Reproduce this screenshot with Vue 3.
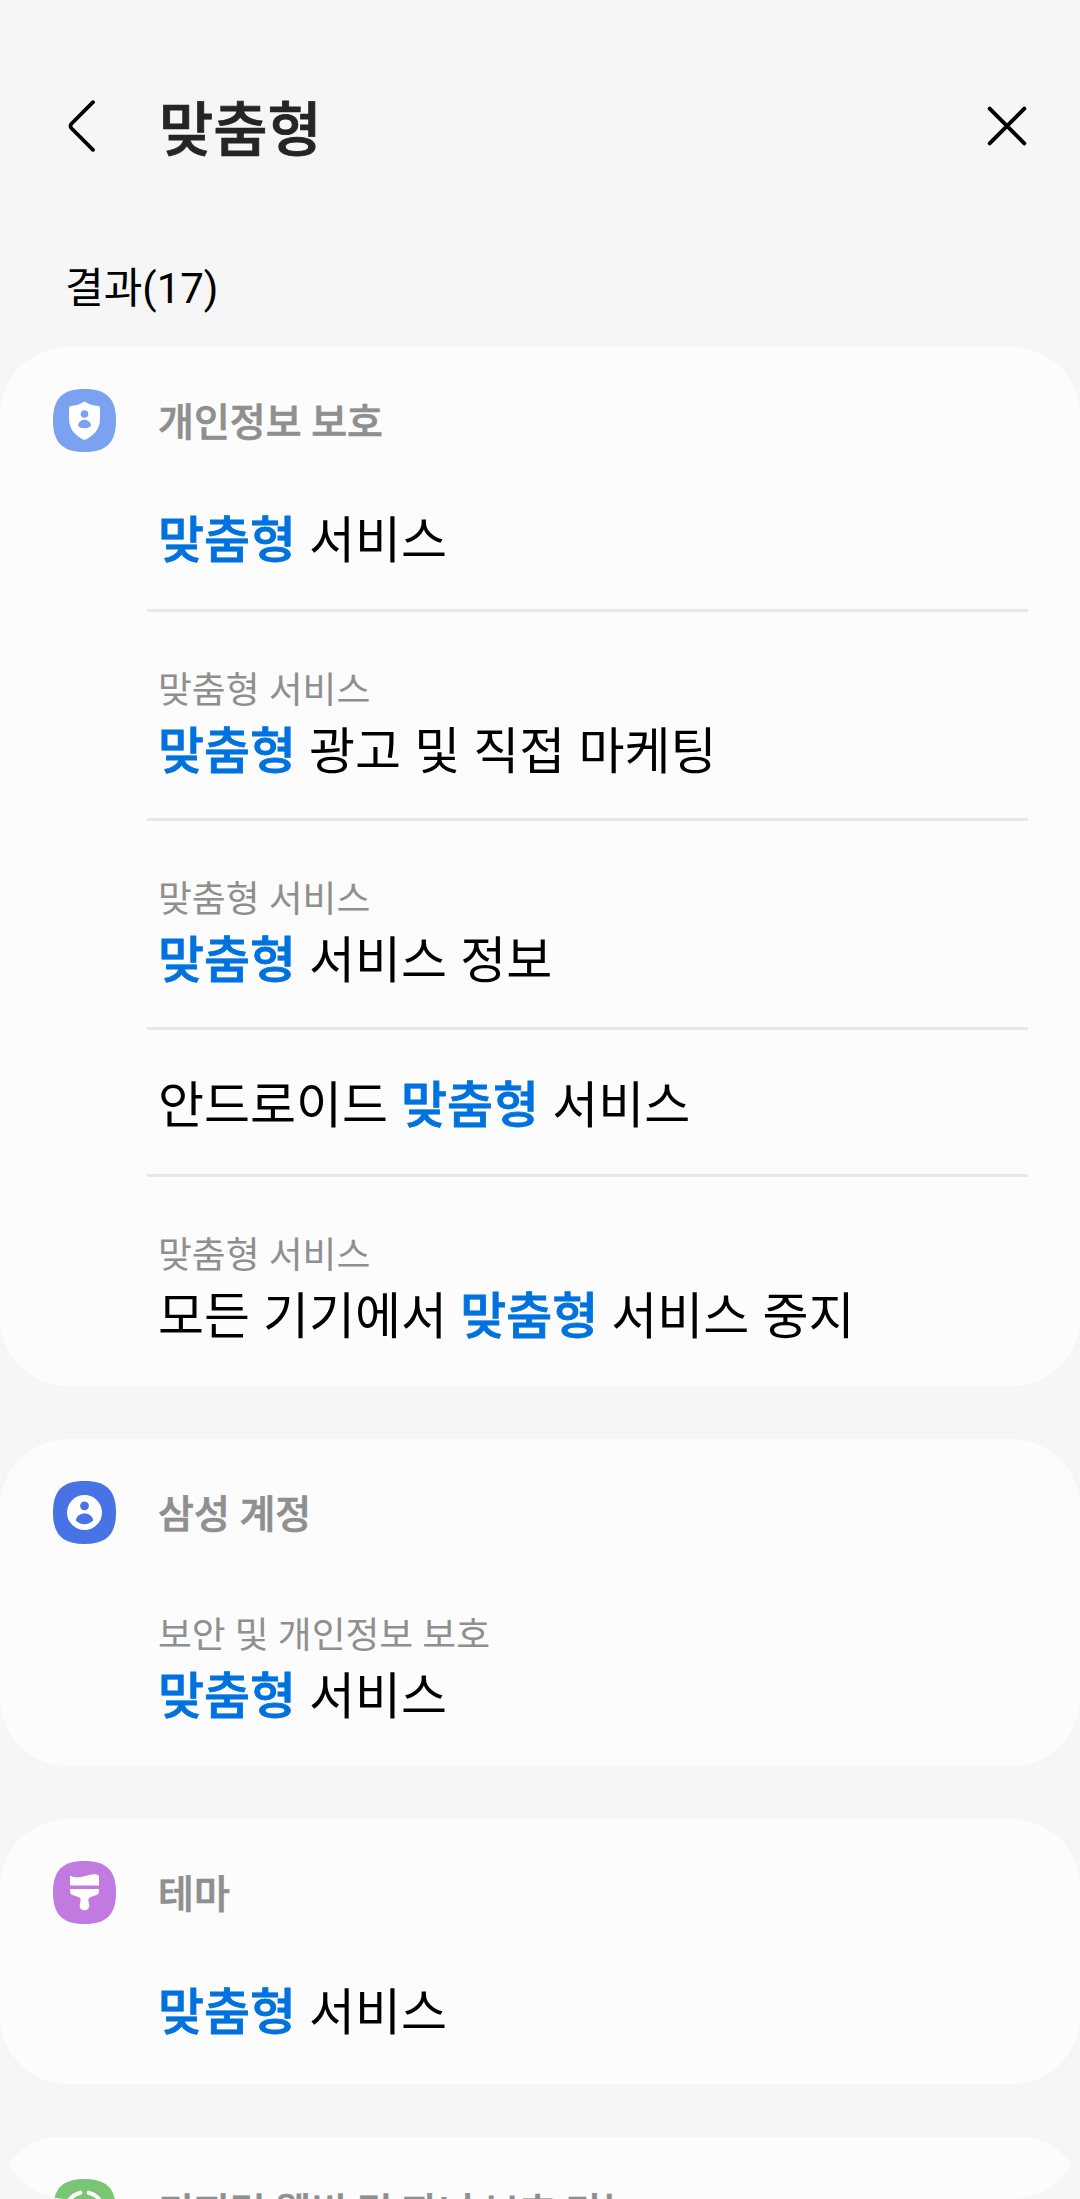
<template>
  <div class="screen">
    <header class="app-bar">
      <button class="back-button" aria-label="뒤로">
        <svg width="30" height="52" viewBox="0 0 30 52">
          <path
            d="M25 2.2 L3.2 24 Q1.8 26 3.2 28 L25 49.8"
            fill="none"
            stroke="#000"
            stroke-width="3.8"
            stroke-linecap="round"
            stroke-linejoin="round"
          />
        </svg>
      </button>
      <h1 class="query">맞춤형</h1>
      <button class="clear-button" aria-label="지우기">
        <svg width="40" height="40" viewBox="0 0 40 40">
          <path
            d="M2.7 2.7 L37.3 37.3 M37.3 2.7 L2.7 37.3"
            fill="none"
            stroke="#000"
            stroke-width="4"
            stroke-linecap="round"
          />
        </svg>
      </button>
    </header>

    <p class="result-count">결과(17)</p>

    <!-- Lista de resultados, recortada con esquinas redondeadas -->
    <main class="results">
      <section v-for="group in groups" :key="group.title" class="card">
        <div class="card-header">
          <svg class="app-icon" width="63" height="63" viewBox="0.5 0.5 63 63">
            <path
              d="M32 .5 C54 .5 63.5 10 63.5 32 C63.5 54 54 63.5 32 63.5 C10 63.5 .5 54 .5 32 C.5 10 10 .5 32 .5 Z"
              :fill="group.color"
            />
            <g v-if="group.icon === 'shield'">
              <path
                d="M32 13 Q38.5 17 46 17.5 Q47.5 17.8 47.5 19.5 V30 C47.5 41 41 47.5 32 51.5 C23 47.5 16.5 41 16.5 30 V19.5 Q16.5 17.8 18 17.5 Q25.5 17 32 13 Z"
                fill="#fff"
              />
              <circle cx="32" cy="25.5" r="3.8" :fill="group.color" />
              <path
                d="M25.5 37.5 C26 29 38 29 38.5 37.5 Q36 39.7 32 39.7 Q28 39.7 25.5 37.5 Z"
                :fill="group.color"
              />
            </g>
            <g v-else-if="group.icon === 'account'">
              <circle cx="32" cy="32" r="17.5" fill="#fff" />
              <circle cx="32" cy="25.3" r="4.4" :fill="group.color" />
              <path
                d="M23.3 40 C24.5 30.5 39.5 30.5 40.7 40 Q37 43.7 32 43.7 Q27 43.7 23.3 40 Z"
                :fill="group.color"
              />
            </g>
            <g v-else-if="group.icon === 'brush'" fill="#fff">
              <path d="M17.5 15.3 C29 19.5 34 13.5 42 13.7 Q46.5 14 46.5 16 V25 H17.5 Z" />
              <path
                d="M17.5 28.5 H46.5 V31 Q46.5 33.3 44 34.5 L37.5 36.8 Q35.3 38 36 41 L36.8 45 C36.8 51.5 27.2 51.5 27.2 45 L28 41 Q28.7 38 26.5 36.8 L20 34.5 Q17.5 33.3 17.5 31 Z"
              />
            </g>
            <g v-else fill="none" stroke="#fff" stroke-width="4.2" stroke-linecap="round">
              <path d="M27.7 14.2 A18.4 18.4 0 0 0 14.2 27.7" />
              <path d="M36.3 14.2 A18.4 18.4 0 0 1 49.8 27.7" />
            </g>
          </svg>
          <h2 class="card-title">{{ group.title }}</h2>
        </div>

        <ul class="rows">
          <li v-for="row in group.rows" :key="row.id" class="row" :class="{ 'has-path': row.path }">
            <p v-if="row.path" class="row-path">{{ row.path }}</p>
            <p class="row-title">{{ row.before }}<b class="match">{{ keyword }}</b>{{ row.after }}</p>
          </li>
        </ul>
      </section>
    </main>
  </div>
</template>

<script setup>
const keyword = '맞춤형';

// Resultados agrupados por aplicación
const groups = [
  {
    title: '개인정보 보호',
    icon: 'shield',
    color: '#7aa2f0',
    rows: [
      { id: 1, before: '', after: ' 서비스' },
      { id: 2, path: '맞춤형 서비스', before: '', after: ' 광고 및 직접 마케팅' },
      { id: 3, path: '맞춤형 서비스', before: '', after: ' 서비스 정보' },
      { id: 4, before: '안드로이드 ', after: ' 서비스' },
      { id: 5, path: '맞춤형 서비스', before: '모든 기기에서 ', after: ' 서비스 중지' }
    ]
  },
  {
    title: '삼성 계정',
    icon: 'account',
    color: '#4873e4',
    rows: [
      { id: 6, path: '보안 및 개인정보 보호', before: '', after: ' 서비스' }
    ]
  },
  {
    title: '테마',
    icon: 'brush',
    color: '#c07ae0',
    rows: [
      { id: 7, before: '', after: ' 서비스' }
    ]
  },
  {
    title: '디지털 웰빙 및 자녀 보호 기능',
    icon: 'wellbeing',
    color: '#79c573',
    rows: []
  }
];
</script>

<style>
body {
  background: #f6f6f6;
}
</style>

<style scoped>
.screen {
  display: flex;
  flex-direction: column;
  height: 2199px;
  overflow: hidden;
  background: #f6f6f6;
  color: #000;
  font-family: Roboto, "Noto Sans CJK KR", sans-serif;
}

h1,
h2,
p,
ul {
  margin: 0;
  padding: 0;
  font-weight: 400;
}

button {
  display: flex;
  padding: 0;
  border: 0;
  background: none;
}

.app-bar {
  display: flex;
  flex: none;
  align-items: center;
  height: 132px;
  margin-top: 60px;
  padding: 0 53px 0 68px;
}

.query {
  flex: 1;
  margin-left: 61px;
  padding-top: 9px;
  color: #252525;
  font-size: 59px;
  font-weight: 500;
  line-height: 80px;
  -webkit-text-stroke: 0.8px #252525;
}

.result-count {
  flex: none;
  height: 60px;
  margin: 67px 0 28px 65px;
  font-size: 42px;
  line-height: 60px;
}

.results {
  display: flex;
  flex: 1;
  flex-direction: column;
  gap: 53px;
  min-height: 0;
  overflow: hidden;
  border-radius: 0 0 68px 68px;
}

.card {
  flex: none;
  border-radius: 68px;
  background: #fcfcfc;
}

.card-header {
  display: flex;
  align-items: center;
  height: 63px;
  padding: 42px 0 13px 53px;
}

.app-icon {
  flex: none;
}

.card-title {
  margin-left: 42px;
  padding-top: 4px;
  color: #8f8f8f;
  font-size: 39px;
  font-weight: 500;
  line-height: 54px;
  -webkit-text-stroke: 0.7px #8f8f8f;
}

.rows {
  margin: 0 52px 0 147px;
  list-style: none;
}

.row {
  padding: 41px 0 33px 11px;
  border-bottom: 3px solid #e8e8e8;
}

.row.has-path {
  padding-top: 53px;
  padding-bottom: 31px;
}

.row:last-child {
  border-bottom-color: transparent;
}

.row-path {
  color: #8f8f8f;
  font-size: 36.8px;
  line-height: 52px;
}

.row-title {
  font-size: 50px;
  line-height: 70px;
  white-space: pre;
  word-spacing: 0.7px;
}

.match {
  color: #0072de;
  font-weight: 500;
  -webkit-text-stroke: 0.8px #0072de;
}
</style>
